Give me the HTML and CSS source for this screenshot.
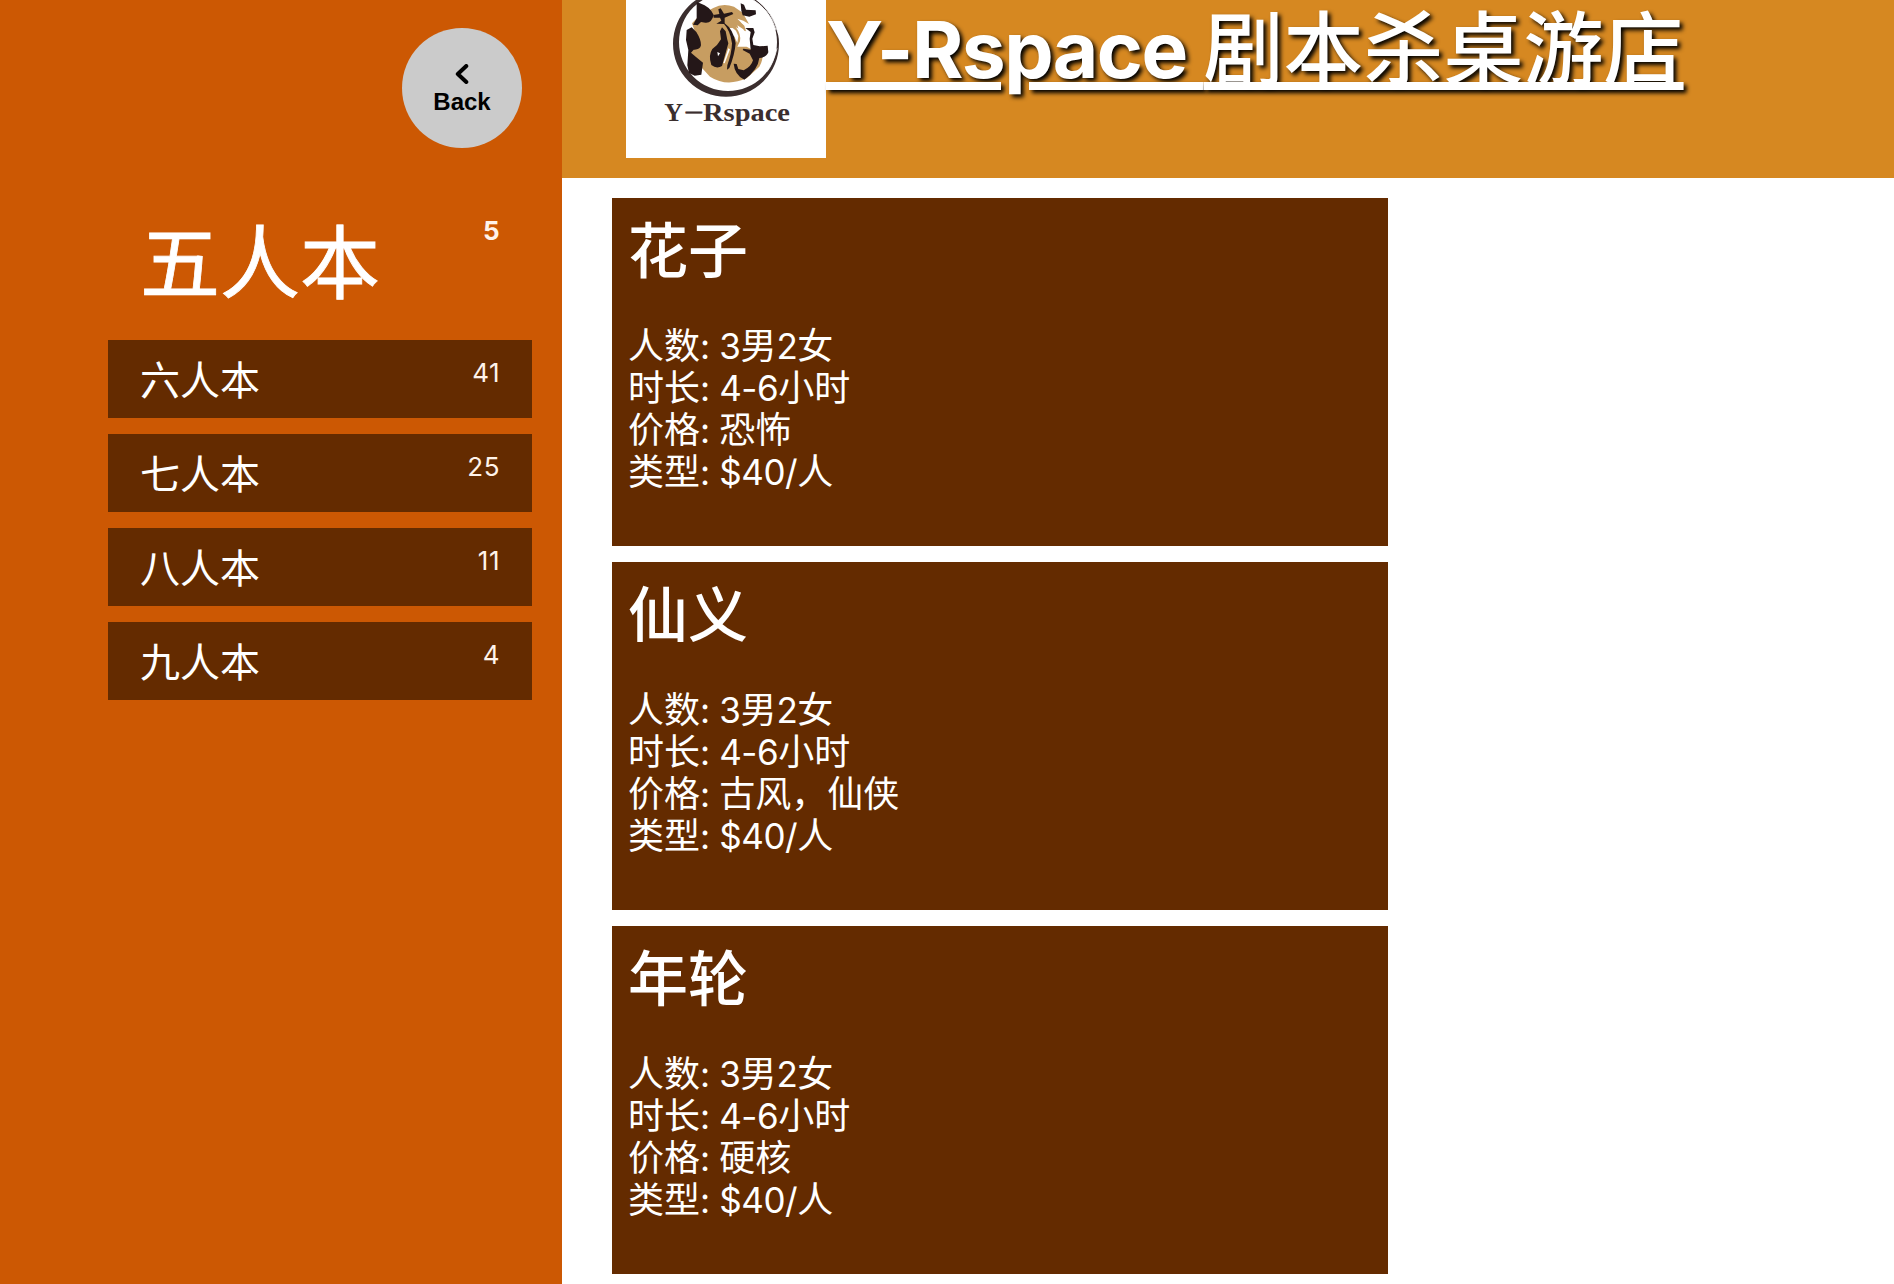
FILE: index.html
```html
<!DOCTYPE html>
<html lang="zh-CN">
<head>
<meta charset="utf-8">
<title>Y-Rspace 剧本杀桌游店</title>
<link rel="stylesheet" href="styles.css">
</head>
<body>
<div class="layout">
  <aside class="sidebar">
    <button class="back" type="button">
      <svg class="back-icon" viewBox="0 0 14 20" aria-hidden="true"><path d="M11.300 2 2.800 10l8.500 8"/></svg>
      <span>Back</span>
    </button>
    <nav class="menu">
      <a class="menu-item active"><span class="name">五人本</span><span class="count">5</span></a>
      <a class="menu-item"><span class="name">六人本</span><span class="count">41</span></a>
      <a class="menu-item"><span class="name">七人本</span><span class="count">25</span></a>
      <a class="menu-item"><span class="name">八人本</span><span class="count">11</span></a>
      <a class="menu-item"><span class="name">九人本</span><span class="count">4</span></a>
    </nav>
  </aside>
  <div class="page">
    <header class="header">
      <svg class="logo" viewBox="78 -126 600 600" role="img" aria-label="Y-Rspace">
        <rect x="78" y="-126" width="600" height="600" fill="#fff"/>
        <path fill="#c79d61" d="M276 70 300 45 340 24Q368 8 402 20L428 38 447 72 430 62 412 56 433 77 438 94 420 88 408 82Q424 104 420 124L412 140 440 140 486 165Q490 180 478 200L440 235Q380 262 330 230L306 204 270 158 290 110Z"/>
        <path fill="#fff" d="M388 84 398 84 408 92 415 108 412 128 402 108 394 118ZM412 76 430 88 434 96 416 88ZM426 62 446 76 441 80 424 68Z"/>
        <path fill="#3b2e2e" fill-rule="evenodd" d="M219 131a159 159 0 1 0 318 0a159 159 0 1 0-318 0ZM237 126a147 147 0 1 1 294 0a147 147 0 1 1-294 0Z"/>
        <path fill="none" stroke="#fff" stroke-width="2.500" d="M455-4Q510 30 528 90M466-4Q520 36 536 105M531 145Q520 190 501 215"/>
        <g fill="#241718">
          <path d="M290 6 300 10Q330 20 341 45Q335 70 316 68L303 66 293 76 279 74 290 55ZM260 90 275 82 289 96Q304 120 303 136Q300 150 281 149L273 158 288 171 309 188 304 224 284 227 267 219 262 196 265 150 258 120Z"/>
          <path d="M340 45 358 42 355 28 362 25 372 41 396 36 400 42 374 53 374 70Q400 88 407 130Q404 166 388 204L381 209 382 196Q395 160 396 130Q390 90 372 72L349 71 364 62 360 53 341 53Z"/>
          <path d="M366 82 377 94 382 119 385 130 378 155 366 198Q350 208 334 195Q324 166 337 147Q354 135 363 118L360 94Z"/>
          <path d="M422 10 432 14 438 29 467 31 468 43 448 50 428 46 424 32Z"/>
          <path d="M436 84 460 84 464 97 457 116 460 135 479 139 503 137 505 157Q500 172 478 174Q474 210 433 239Q404 225 401 191L410 192 415 207 431 211Q454 200 459 181L449 161 428 150 430 146 452 149 449 116 452 96Z"/>
        </g>
        <path fill="#fff" d="M352 156 360 160 354 169ZM385 145 390 148 374 190 370 189Z"/>
        <g class="logo-text">
          <text x="193" y="362" textLength="56" lengthAdjust="spacingAndGlyphs">Y</text>
          <text class="dash" x="258" y="356" textLength="47" lengthAdjust="spacingAndGlyphs">–</text>
          <text x="309" y="362" textLength="261" lengthAdjust="spacingAndGlyphs">Rspace</text>
        </g>
      </svg>
      <h1 class="title"><span class="latin">Y-Rspace </span>剧本杀桌游店</h1>
    </header>
    <main class="cards">
      <article class="card">
        <h2>花子</h2>
        <p>人数<i>: 3</i>男<i>2</i>女</p><p>时长<i>: 4-6</i>小时</p><p>价格<i>: </i>恐怖</p><p>类型<i>: $40/</i>人</p>
      </article>
      <article class="card">
        <h2>仙义</h2>
        <p>人数<i>: 3</i>男<i>2</i>女</p><p>时长<i>: 4-6</i>小时</p><p>价格<i>: </i>古风，仙侠</p><p>类型<i>: $40/</i>人</p>
      </article>
      <article class="card">
        <h2>年轮</h2>
        <p>人数<i>: 3</i>男<i>2</i>女</p><p>时长<i>: 4-6</i>小时</p><p>价格<i>: </i>硬核</p><p>类型<i>: $40/</i>人</p>
      </article>
    </main>
  </div>
</div>
</body>
</html>
```
FILE: styles.css
```css
* { box-sizing: border-box; }
body {
  margin: 0;
  height: 1284px;
  overflow: hidden;
  background: #fff;
  color: #fff;
  font-family: Inter, "Noto Sans CJK SC", sans-serif;
}
.layout { display: flex; height: 1284px; }

.sidebar {
  width: 562px;
  flex: none;
  padding: 28px 30px 0 108px;
  background: #cc5803;
  display: flex;
  flex-direction: column;
}
.back {
  align-self: flex-end;
  margin-right: 10px;
  width: 120px;
  height: 120px;
  padding: 3px 0 0;
  border: 0;
  border-radius: 50%;
  background: #cbcbcb;
  color: #000;
  display: flex;
  flex-direction: column;
  align-items: center;
  justify-content: center;
  font: bold 24px/28px "Liberation Sans", Arial, sans-serif;
}
.back-icon { width: 14px; height: 20px; margin: 0 0 4px; fill: none; stroke: #000; stroke-width: 4; stroke-linecap: round; stroke-linejoin: round; }

.menu { display: flex; flex-direction: column; gap: 16px; margin-top: 54px; }
.menu-item {
  height: 78px;
  padding: 0 32px;
  background: #642b00;
  display: flex;
  justify-content: space-between;
  align-items: flex-start;
}
.name { font-size: 40px; line-height: 78px; padding-top: 2px; }
.count { font-size: 26px; line-height: 32px; padding-top: 17px; letter-spacing: 0.5px; color: #fff3ea; }
.menu-item.active { height: 122px; background: none; }
.active .name { font-size: 80px; line-height: 122px; padding-top: 0; -webkit-text-stroke: 0.8px #fff; }
.active .count { font-weight: 700; padding-top: 13px; }

.page { flex: 1; }
.header {
  height: 178px;
  padding-left: 64px;
  background: #d68821;
  display: flex;
  align-items: flex-start;
}
.logo { width: 200px; height: 200px; margin-top: -42px; flex: none; }
.logo-text { font: bold 78px "Liberation Serif", serif; fill: #3b2e2e; }
.logo-text .dash { font-weight: normal; stroke: #3b2e2e; stroke-width: 2; }
.title {
  margin: 0;
  font-size: 80px;
  line-height: 98px;
  font-weight: 500;
  white-space: nowrap;
  text-decoration: underline;
  text-decoration-thickness: 8px;
  text-underline-offset: 4px;
  text-shadow: 3px 3px 4px #000;
}
.latin { font-size: 78.5px; font-weight: 700; letter-spacing: -1.6px; }

.cards { display: flex; flex-direction: column; gap: 16px; padding: 20px 0 0 50px; }
.card { width: 776px; height: 348px; padding: 11px 16px 16px; background: #642b00; }
.card h2 { margin: 0 0 32px; font-size: 60px; line-height: 84px; font-weight: 500; }
.card p { margin: 0; font-size: 36px; line-height: 42px; }
.card i { font-style: normal; font-size: 35px; letter-spacing: -0.4px; }
```
